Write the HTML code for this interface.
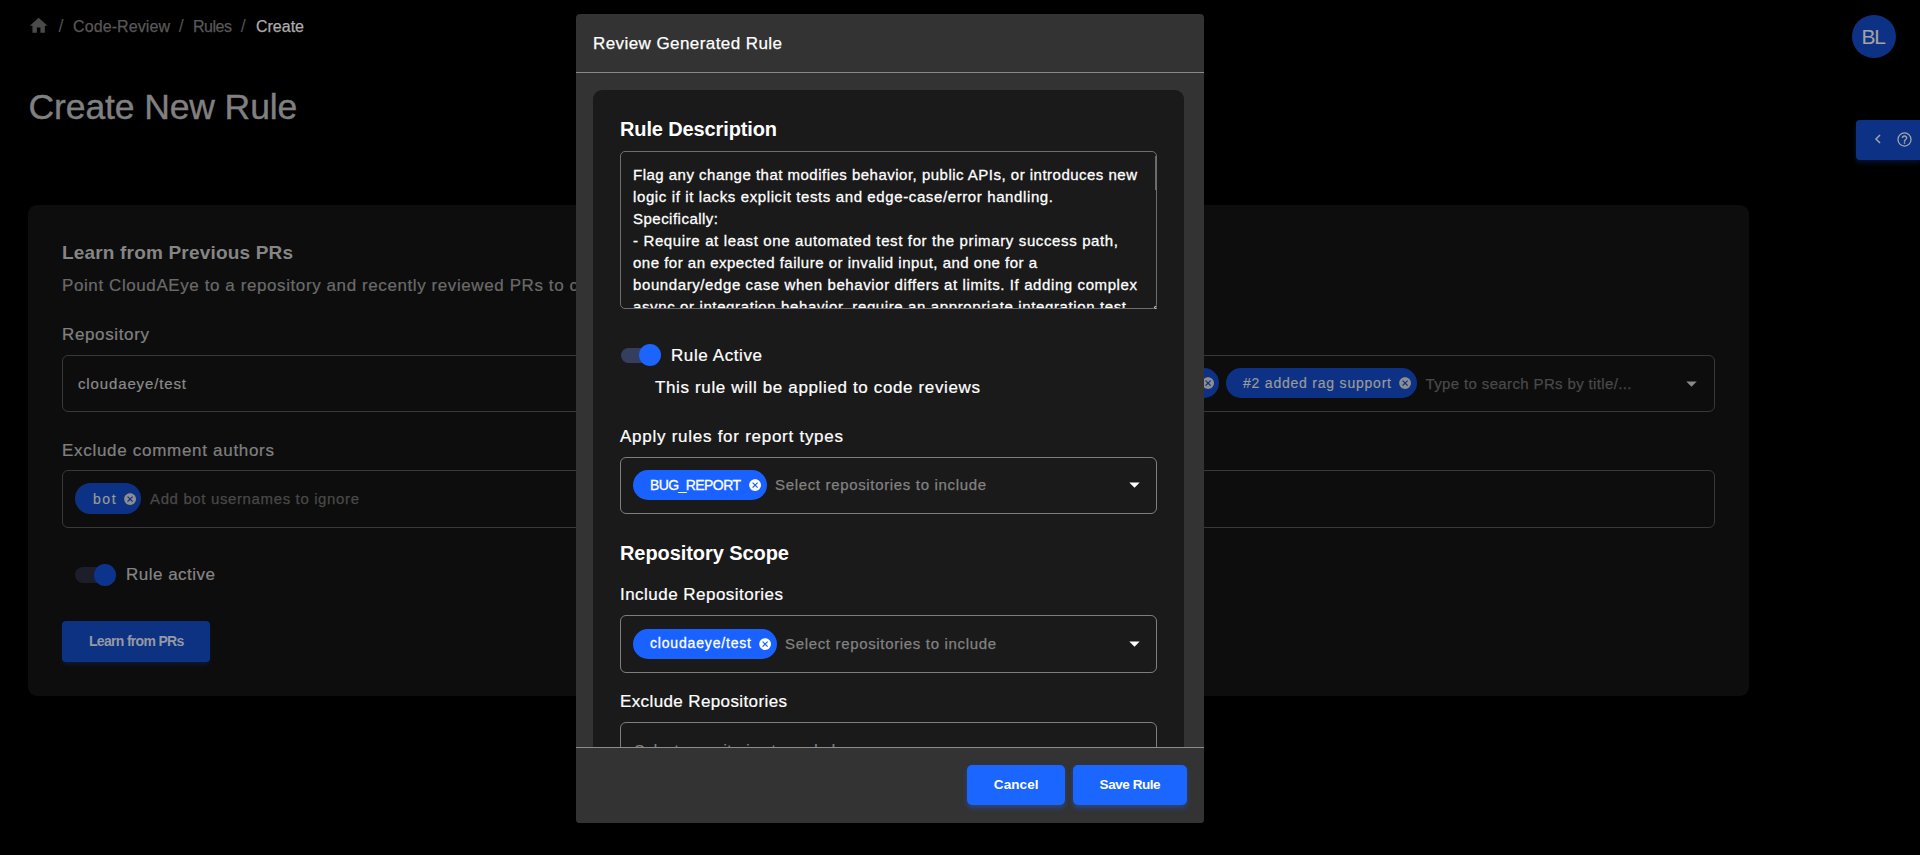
<!DOCTYPE html>
<html><head><meta charset="utf-8"><title>Create New Rule</title>
<style>
*{box-sizing:border-box;margin:0;padding:0}
html,body{width:1920px;height:855px;overflow:hidden;background:#000;font-family:"Liberation Sans",sans-serif;}
.abs{position:absolute}
.t{position:absolute;white-space:pre;}
.layer{position:absolute;left:0;top:0;width:1920px;height:855px;}
</style></head>
<body>
<!-- ================= PAGE (dimmed) ================= -->
<div class="layer" id="page">
  <!-- home icon -->
  <svg class="abs" style="left:27.9px;top:14.7px" width="21.3" height="21.3" viewBox="0 0 24 24"><path fill="#4a4a4a" d="M10 20v-6h4v6h5v-8h3L12 3 2 12h3v8z"/></svg>
  <!-- card -->
  <div class="abs" style="left:28px;top:204.7px;width:1721px;height:491.6px;background:#0d0d0d;border-radius:9px"></div>
  <!-- repo input (left) -->
  <div class="abs" style="left:62px;top:355px;width:600px;height:57px;border:1px solid #383838;border-radius:6px"></div>
  <!-- PR select (right) -->
  <div class="abs" style="left:1100px;top:355px;width:615px;height:57px;border:1px solid #383838;border-radius:6px"></div>
  <!-- exclude authors -->
  <div class="abs" style="left:62px;top:470px;width:1653px;height:58px;border:1px solid #383838;border-radius:6px"></div>
  <!-- bot chip -->
  <div class="abs" style="left:75px;top:483px;width:65.5px;height:31px;border-radius:16px;background:#0d3285"></div>
  <svg class="abs" style="left:122.9px;top:491.6px" width="14.2" height="14.2" viewBox="0 0 24 24"><path fill="#8e8e8e" d="M12 2C6.47 2 2 6.47 2 12s4.47 10 10 10 10-4.47 10-10S17.53 2 12 2zm5 13.59L15.59 17 12 13.41 8.41 17 7 15.59 10.59 12 7 8.41 8.41 7 12 10.59 15.59 7 17 8.41 13.41 12 17 15.59z"/></svg>
  <!-- chip remnant (left of #2 chip) -->
  <div class="abs" style="left:1150px;top:367.8px;width:69.3px;height:30.3px;border-radius:16px;background:#0d3285"></div>
  <svg class="abs" style="left:1200.9px;top:376.0px" width="14.2" height="14.2" viewBox="0 0 24 24"><path fill="#8e8e8e" d="M12 2C6.47 2 2 6.47 2 12s4.47 10 10 10 10-4.47 10-10S17.53 2 12 2zm5 13.59L15.59 17 12 13.41 8.41 17 7 15.59 10.59 12 7 8.41 8.41 7 12 10.59 15.59 7 17 8.41 13.41 12 17 15.59z"/></svg>
  <!-- #2 chip -->
  <div class="abs" style="left:1225.8px;top:367.8px;width:190.9px;height:30.3px;border-radius:16px;background:#0d3285"></div>
  <svg class="abs" style="left:1397.9px;top:376.0px" width="14.2" height="14.2" viewBox="0 0 24 24"><path fill="#8e8e8e" d="M12 2C6.47 2 2 6.47 2 12s4.47 10 10 10 10-4.47 10-10S17.53 2 12 2zm5 13.59L15.59 17 12 13.41 8.41 17 7 15.59 10.59 12 7 8.41 8.41 7 12 10.59 15.59 7 17 8.41 13.41 12 17 15.59z"/></svg>
  <!-- dropdown arrow -->
  <svg class="abs" style="left:1678.6px;top:370.5px" width="25" height="25" viewBox="0 0 24 24"><path fill="#8a8a8a" d="M7 10l5 5 5-5z"/></svg>
  <!-- toggle -->
  <div class="abs" style="left:75.2px;top:567.4px;width:34px;height:15.8px;border-radius:8px;background:#1c1e2b"></div>
  <div class="abs" style="left:93.9px;top:564.2px;width:21.7px;height:21.7px;border-radius:50%;background:#0d348c"></div>
  <!-- button -->
  <div class="abs" style="left:62px;top:621.3px;width:148px;height:40.4px;border-radius:4px;background:#0d3282;box-shadow:0 3px 4px -1px rgba(12,51,131,0.4)"></div>
  <!-- avatar -->
  <div class="abs" style="left:1852.2px;top:14.6px;width:43.6px;height:43.6px;border-radius:50%;background:#0d3285"></div>
  <!-- side tab -->
  <div class="abs" style="left:1856px;top:120px;width:64px;height:40px;border-radius:4px 0 0 4px;background:#0d3285;box-shadow:0 3px 5px rgba(12,51,131,0.35)"></div>
  <svg class="abs" style="left:1870px;top:131px" width="16" height="16" viewBox="0 0 24 24"><path fill="none" stroke="#a4a6aa" stroke-width="2.2" d="M15 6l-6 6 6 6"/></svg>
  <svg class="abs" style="left:1896px;top:131px" width="17" height="17" viewBox="0 0 24 24"><circle cx="12" cy="12" r="9.2" fill="none" stroke="#a4a6aa" stroke-width="1.8"/><path fill="#a4a6aa" d="M11 16h2v2h-2zm1-10c-2.21 0-4 1.79-4 4h2c0-1.1.9-2 2-2s2 .9 2 2c0 2-3 1.75-3 5h2c0-2.25 3-2.5 3-5 0-2.21-1.79-4-4-4z"/></svg>
<span class="t" style="left:58.6px;top:17px;font-size:18px;line-height:18px;font-weight:400;color:#505050;letter-spacing:0.000px;">/</span>
<span class="t" style="left:73px;top:19px;font-size:16px;line-height:16px;font-weight:400;color:#585858;letter-spacing:0.095px;-webkit-text-stroke:0.25px #585858;">Code-Review</span>
<span class="t" style="left:178.8px;top:17px;font-size:18px;line-height:18px;font-weight:400;color:#505050;letter-spacing:0.000px;">/</span>
<span class="t" style="left:193px;top:19px;font-size:16px;line-height:16px;font-weight:400;color:#585858;letter-spacing:-0.477px;-webkit-text-stroke:0.25px #585858;">Rules</span>
<span class="t" style="left:240.8px;top:17px;font-size:18px;line-height:18px;font-weight:400;color:#505050;letter-spacing:0.000px;">/</span>
<span class="t" style="left:256px;top:19px;font-size:16px;line-height:16px;font-weight:400;color:#acacac;letter-spacing:-0.006px;-webkit-text-stroke:0.25px #acacac;">Create</span>
<span class="t" style="left:28.6px;top:90px;font-size:35.5px;line-height:35.5px;font-weight:400;color:#808080;letter-spacing:-0.115px;-webkit-text-stroke:0.4px #808080;">Create New Rule</span>
<span class="t" style="left:62px;top:243px;font-size:19px;line-height:19px;font-weight:700;color:#858585;letter-spacing:0.180px;">Learn from Previous PRs</span>
<span class="t" style="left:62px;top:277px;font-size:17px;line-height:17px;font-weight:400;color:#6a6a6a;letter-spacing:0.590px;-webkit-text-stroke:0.22px #6a6a6a;">Point CloudAEye to a repository and recently reviewed PRs to c</span>
<span class="t" style="left:62px;top:326px;font-size:17px;line-height:17px;font-weight:400;color:#808080;letter-spacing:0.637px;-webkit-text-stroke:0.22px #808080;">Repository</span>
<span class="t" style="left:78px;top:376px;font-size:15px;line-height:15px;font-weight:400;color:#8a8a8a;letter-spacing:0.867px;-webkit-text-stroke:0.22px #8a8a8a;">cloudaeye/test</span>
<span class="t" style="left:62px;top:442px;font-size:17px;line-height:17px;font-weight:400;color:#808080;letter-spacing:0.702px;-webkit-text-stroke:0.22px #808080;">Exclude comment authors</span>
<span class="t" style="left:93px;top:492px;font-size:14px;line-height:14px;font-weight:400;color:#9a9a98;letter-spacing:1.566px;-webkit-text-stroke:0.2px #9a9a98;">bot</span>
<span class="t" style="left:150px;top:491px;font-size:15px;line-height:15px;font-weight:400;color:#494949;letter-spacing:0.630px;-webkit-text-stroke:0.25px #494949;">Add bot usernames to ignore</span>
<span class="t" style="left:126px;top:566px;font-size:17px;line-height:17px;font-weight:400;color:#858585;letter-spacing:0.489px;-webkit-text-stroke:0.22px #858585;">Rule active</span>
<span class="t" style="left:89px;top:634px;font-size:14px;line-height:14px;font-weight:700;color:#9499a6;letter-spacing:-0.688px;">Learn from PRs</span>
<span class="t" style="left:1243px;top:376px;font-size:14px;line-height:14px;font-weight:400;color:#9a9a98;letter-spacing:0.784px;-webkit-text-stroke:0.2px #9a9a98;">#2 added rag support</span>
<span class="t" style="left:1425.5px;top:376px;font-size:15px;line-height:15px;font-weight:400;color:#494949;letter-spacing:0.364px;-webkit-text-stroke:0.25px #494949;">Type to search PRs by title/...</span>
<span class="t" style="left:1861.5px;top:26px;font-size:21px;line-height:21px;font-weight:400;color:#a3a3a3;letter-spacing:-1.188px;">BL</span>
</div>

<!-- ================= MODAL ================= -->
<div class="layer" id="modal">
  <div class="abs" style="left:576px;top:14px;width:628px;height:809px;background:#333333;border-radius:4px"></div>
  <div class="abs" style="left:576px;top:72px;width:628px;height:1px;background:#8a8a8a"></div>
  <!-- inner card -->
  <div class="abs" style="left:593px;top:90px;width:591px;height:680px;background:#1a1a1a;border-radius:9px"></div>
  <!-- textarea -->
  <div class="abs" style="left:620px;top:151px;width:537px;height:158px;border:1px solid #6e6e6e;border-radius:5px"></div>
  <div class="abs" style="left:1154.6px;top:155.5px;width:1.6px;height:34px;background:#6a6a6a"></div>
  <div class="abs" style="left:1153.6px;top:305.8px;width:3.4px;height:3.6px;border-radius:50%;background:#c4c4c4"></div><div class="abs" style="left:1155px;top:306.9px;width:1.6px;height:1.4px;border-radius:50%;background:#3a3a3a"></div>
  <!-- toggle -->
  <div class="abs" style="left:620.8px;top:347.5px;width:34px;height:15.6px;border-radius:8px;background:#353e5e"></div>
  <div class="abs" style="left:639.2px;top:344.2px;width:22px;height:22px;border-radius:50%;background:#1b64ff"></div>
  <!-- select 1 -->
  <div class="abs" style="left:620px;top:456.5px;width:537px;height:57px;border:1px solid #7c7e80;border-radius:6px"></div>
  <div class="abs" style="left:632.7px;top:469.8px;width:134.3px;height:30.3px;border-radius:16px;background:#1a62ff"></div>
  <svg class="abs" style="left:748.25px;top:477.8px" width="14.2" height="14.2" viewBox="0 0 24 24"><path fill="#fff" d="M12 2C6.47 2 2 6.47 2 12s4.47 10 10 10 10-4.47 10-10S17.53 2 12 2zm5 13.59L15.59 17 12 13.41 8.41 17 7 15.59 10.59 12 7 8.41 8.41 7 12 10.59 15.59 7 17 8.41 13.41 12 17 15.59z"/></svg>
  <svg class="abs" style="left:1122.2px;top:472.3px" width="25" height="25" viewBox="0 0 24 24"><path fill="#fff" d="M7 10l5 5 5-5z"/></svg>
  <!-- select 2 -->
  <div class="abs" style="left:620px;top:615px;width:537px;height:57.5px;border:1px solid #7c7e80;border-radius:6px"></div>
  <div class="abs" style="left:632.7px;top:628.8px;width:144.3px;height:30.3px;border-radius:16px;background:#1a62ff"></div>
  <svg class="abs" style="left:757.8px;top:636.8px" width="14.2" height="14.2" viewBox="0 0 24 24"><path fill="#fff" d="M12 2C6.47 2 2 6.47 2 12s4.47 10 10 10 10-4.47 10-10S17.53 2 12 2zm5 13.59L15.59 17 12 13.41 8.41 17 7 15.59 10.59 12 7 8.41 8.41 7 12 10.59 15.59 7 17 8.41 13.41 12 17 15.59z"/></svg>
  <svg class="abs" style="left:1122.2px;top:631.3px" width="25" height="25" viewBox="0 0 24 24"><path fill="#fff" d="M7 10l5 5 5-5z"/></svg>
  <!-- select 3 (cut) -->
  <div class="abs" style="left:620px;top:721.5px;width:537px;height:58px;border:1px solid #7c7e80;border-radius:6px"></div>
<span class="t" style="left:593px;top:35px;font-size:17px;line-height:17px;font-weight:400;color:#ffffff;letter-spacing:0.426px;-webkit-text-stroke:0.25px #fff;">Review Generated Rule</span>
<span class="t" style="left:620px;top:119px;font-size:20px;line-height:20px;font-weight:700;color:#ffffff;letter-spacing:-0.128px;">Rule Description</span>
<span class="t" style="left:671px;top:347px;font-size:17px;line-height:17px;font-weight:400;color:#ffffff;letter-spacing:0.595px;-webkit-text-stroke:0.22px #ffffff;">Rule Active</span>
<span class="t" style="left:655px;top:379px;font-size:17px;line-height:17px;font-weight:400;color:#ffffff;letter-spacing:0.636px;-webkit-text-stroke:0.22px #ffffff;">This rule will be applied to code reviews</span>
<span class="t" style="left:620px;top:428px;font-size:17px;line-height:17px;font-weight:400;color:#ffffff;letter-spacing:0.735px;-webkit-text-stroke:0.22px #ffffff;">Apply rules for report types</span>
<span class="t" style="left:650px;top:478px;font-size:14px;line-height:14px;font-weight:400;color:#ffffff;letter-spacing:-0.580px;-webkit-text-stroke:0.3px #fff;">BUG_REPORT</span>
<span class="t" style="left:775px;top:477px;font-size:15px;line-height:15px;font-weight:400;color:#828282;letter-spacing:0.663px;-webkit-text-stroke:0.25px #828282;">Select repositories to include</span>
<span class="t" style="left:620px;top:543px;font-size:20px;line-height:20px;font-weight:700;color:#ffffff;letter-spacing:-0.070px;">Repository Scope</span>
<span class="t" style="left:620px;top:586px;font-size:17px;line-height:17px;font-weight:400;color:#ffffff;letter-spacing:0.472px;-webkit-text-stroke:0.22px #ffffff;">Include Repositories</span>
<span class="t" style="left:650px;top:636px;font-size:14px;line-height:14px;font-weight:400;color:#ffffff;letter-spacing:0.823px;-webkit-text-stroke:0.3px #fff;">cloudaeye/test</span>
<span class="t" style="left:785px;top:636px;font-size:15px;line-height:15px;font-weight:400;color:#828282;letter-spacing:0.663px;-webkit-text-stroke:0.25px #828282;">Select repositories to include</span>
<span class="t" style="left:620px;top:693px;font-size:17px;line-height:17px;font-weight:400;color:#ffffff;letter-spacing:0.384px;-webkit-text-stroke:0.22px #ffffff;">Exclude Repositories</span>
<span class="t" style="left:634.6px;top:742px;font-size:15px;line-height:15px;font-weight:400;color:#828282;letter-spacing:0.464px;-webkit-text-stroke:0.25px #828282;">Select repositories to exclude</span>
</div>
<div class="layer" id="ta" style="clip-path:inset(152px 764px 547px 621px)">
<span class="t" style="left:633px;top:167px;font-size:15px;line-height:15px;font-weight:400;color:#ffffff;letter-spacing:0.489px;-webkit-text-stroke:0.3px #fff;">Flag any change that modifies behavior, public APIs, or introduces new</span>
<span class="t" style="left:633px;top:189px;font-size:15px;line-height:15px;font-weight:400;color:#ffffff;letter-spacing:0.611px;-webkit-text-stroke:0.3px #fff;">logic if it lacks explicit tests and edge-case/error handling.</span>
<span class="t" style="left:633px;top:211px;font-size:15px;line-height:15px;font-weight:400;color:#ffffff;letter-spacing:0.483px;-webkit-text-stroke:0.3px #fff;">Specifically:</span>
<span class="t" style="left:633px;top:233px;font-size:15px;line-height:15px;font-weight:400;color:#ffffff;letter-spacing:0.628px;-webkit-text-stroke:0.3px #fff;">- Require at least one automated test for the primary success path,</span>
<span class="t" style="left:633px;top:255px;font-size:15px;line-height:15px;font-weight:400;color:#ffffff;letter-spacing:0.496px;-webkit-text-stroke:0.3px #fff;">one for an expected failure or invalid input, and one for a</span>
<span class="t" style="left:633px;top:277px;font-size:15px;line-height:15px;font-weight:400;color:#ffffff;letter-spacing:0.598px;-webkit-text-stroke:0.3px #fff;">boundary/edge case when behavior differs at limits. If adding complex</span>
<span class="t" style="left:633px;top:299px;font-size:15px;line-height:15px;font-weight:400;color:#ffffff;letter-spacing:0.619px;-webkit-text-stroke:0.3px #fff;">async or integration behavior, require an appropriate integration test</span>
</div>
<!-- ================= FOOTER ================= -->
<div class="layer" id="foot">
  <div class="abs" style="left:576px;top:747px;width:628px;height:76px;background:#333333;border-top:1px solid #8c8c8c;border-radius:0 0 4px 4px"></div>
  <div class="abs" style="left:967.2px;top:764.5px;width:97.9px;height:40.4px;border-radius:5px;background:#1a66ff;box-shadow:0 3px 5px rgba(26,98,255,0.4)"></div>
  <div class="abs" style="left:1073px;top:764.5px;width:114.2px;height:40.4px;border-radius:5px;background:#1a66ff;box-shadow:0 3px 5px rgba(26,98,255,0.4)"></div>
<span class="t" style="left:993.8px;top:778px;font-size:13.5px;line-height:13.5px;font-weight:700;color:#ffffff;letter-spacing:0.104px;">Cancel</span>
<span class="t" style="left:1099.6px;top:778px;font-size:13.5px;line-height:13.5px;font-weight:700;color:#ffffff;letter-spacing:-0.443px;">Save Rule</span>
</div>
</body></html>
